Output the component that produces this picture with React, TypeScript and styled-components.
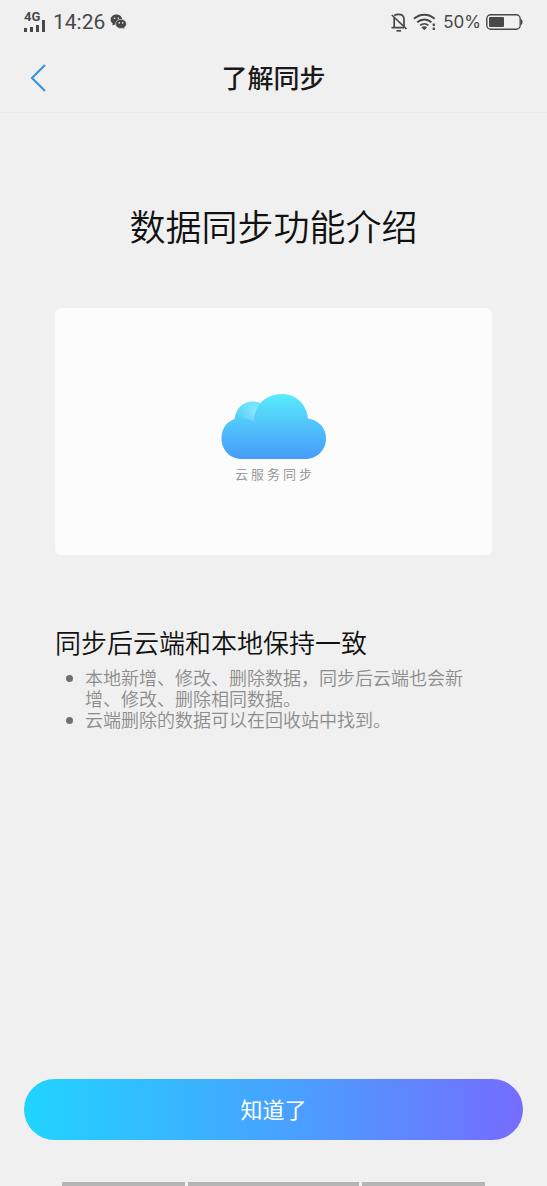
import React from "react";
import styled, { createGlobalStyle } from "styled-components";

const GlobalStyle = createGlobalStyle`
  * { box-sizing: border-box; }
  body {
    margin: 0;
    background: #f0f0f0;
    color: #111;
    font-family: Roboto, "Noto Sans CJK SC", sans-serif;
  }
`;

const Page = styled.div`
  min-height: 100vh;
  display: flex;
  flex-direction: column;
`;

const StatusBar = styled.div`
  display: flex;
  align-items: center;
  justify-content: space-between;
  height: 44px;
  padding: 0 24px;
  color: #484848;
`;

const StatusGroup = styled.div`
  display: flex;
  align-items: center;
  gap: 5px;
`;

const Signal = styled.div`
  display: flex;
  flex-direction: column;
  width: 24px;
  font-size: 13px;
  line-height: 10px;
  font-weight: 700;

  svg {
    margin-top: -3px;
  }
`;

const Clock = styled.span`
  font-size: 21px;
  line-height: 24px;
`;

const Percent = styled.span`
  font-family: Inter, sans-serif;
  font-size: 17px;
  line-height: 24px;
`;

const Header = styled.header`
  display: grid;
  grid-template-columns: 52px 1fr 52px;
  align-items: center;
  height: 69px;
  padding: 0 12px;
  border-bottom: 1px solid #e9e9e9;
`;

const BackButton = styled.button`
  display: flex;
  align-items: center;
  justify-content: center;
  height: 52px;
  padding: 0;
  border: 0;
  background: none;
  color: #3b94e0;
`;

const HeaderTitle = styled.h1`
  margin: 0;
  padding-top: 2px;
  text-align: center;
  font-size: 26px;
  line-height: 40px;
  font-weight: 500;
  color: #1a1a1a;
`;

const Main = styled.main`
  flex: 1;
  padding: 88px 55px 40px;
`;

const Title = styled.h2`
  margin: 0;
  text-align: center;
  font-size: 36px;
  line-height: 56px;
  font-weight: 350;
`;

const Card = styled.figure`
  display: flex;
  flex-direction: column;
  align-items: center;
  margin: 51px 0 0;
  padding: 85px 0 69px;
  border-radius: 6px;
  background: #fcfcfc;
`;

const Caption = styled.figcaption`
  margin-top: 5px;
  font-size: 13px;
  line-height: 22px;
  letter-spacing: 3px;
  padding-left: 3px;
  font-weight: 350;
  color: #909090;
`;

const SectionTitle = styled.h3`
  margin: 69px 0 0;
  font-size: 26px;
  line-height: 40px;
  font-weight: 350;
`;

const List = styled.ul`
  margin: 4px 0 0;
  padding: 0 18px 0 30px;
  list-style: none;
  font-size: 18px;
  line-height: 21px;
  font-weight: 350;
  color: #8c8c8c;
`;

const Item = styled.li`
  position: relative;

  &::before {
    content: "";
    position: absolute;
    left: -19px;
    top: 7px;
    width: 7px;
    height: 7px;
    border-radius: 50%;
    background: #707070;
  }
`;

const Footer = styled.footer`
  padding: 0 24px;
`;

const Confirm = styled.button`
  display: block;
  width: 100%;
  height: 61px;
  padding: 2px 0 0;
  border: 0;
  border-radius: 31px;
  background: linear-gradient(90deg, #20d4ff 0%, #46a4ff 50%, #766cff 100%);
  color: #fff;
  font-family: inherit;
  font-size: 22px;
  line-height: 32px;
`;

const GestureBar = styled.div`
  display: grid;
  grid-template-columns: 123fr 171fr 123fr;
  gap: 3px;
  margin: 42px 38px 0;

  span {
    height: 4px;
    background: #b5b5b5;
  }
`;

const SignalBars = () => (
  <svg width="22" height="13" viewBox="0 0 22 13" fill="currentColor" aria-hidden="true">
    <rect x="0" y="9" width="3" height="4" />
    <rect x="6" y="8" width="3" height="5" />
    <rect x="12" y="6" width="3" height="7" />
    <rect x="18" y="1" width="3" height="12" />
  </svg>
);

const WechatIcon = () => (
  <svg width="17" height="16" viewBox="0 0 17 16" aria-hidden="true">
    <path
      d="M6.4 .5C3.200 .5 .6 2.700.6 5.500c0 1.600.8 3 2.200 3.900L2.300 11.500l2.300-1.100c.6.200 1.200.300 1.900.300C9.700 10.700 12.200 8.300 12.200 5.500S9.700 .5 6.400 .5z"
      fill="#484848"
    />
    <path
      d="M11 5.300c-3.100 0-5.400 2-5.400 4.600s2.300 4.600 5.400 4.600c.6 0 1.200-.1 1.800-.3l1.900 1-.4-1.800c1.300-.8 2.100-2.100 2.100-3.500 0-2.600-2.300-4.600-5.400-4.600z"
      fill="#484848"
      stroke="#f0f0f0"
      strokeWidth="0.6"
    />
    <g fill="#f0f0f0">
      <circle cx="4.500" cy="4.200" r=".8" />
      <circle cx="8.300" cy="4.200" r=".8" />
      <circle cx="9.300" cy="8.900" r=".8" />
      <circle cx="12.700" cy="8.900" r=".8" />
    </g>
  </svg>
);

const MutedBell = () => (
  <svg
    width="17"
    height="19"
    viewBox="0 0 17 19"
    fill="none"
    stroke="currentColor"
    strokeWidth="1.700"
    aria-hidden="true"
  >
    <path d="M3.200 4.500v10M.5 14.600h12.500M3.200 2.400C4.600 1.600 6 1.300 7.600 1.300c3.400 0 5.400 2 5.400 5v7" />
    <path d="M.8 2 15.500 16" />
    <path d="M5.500 17.800h4.500" />
  </svg>
);

const WifiIcon = () => (
  <svg
    width="25"
    height="18"
    viewBox="0 0 25 18"
    fill="none"
    stroke="currentColor"
    strokeWidth="1.900"
    aria-hidden="true"
  >
    <path d="M1 5.800C6.800.4 15.800.4 21.600 5.800" />
    <path d="M4.200 9.200c4-3.700 10.200-3.700 14.200 0" />
    <path d="M7.200 12.400c2.400-2.100 5.800-2.100 8.200 0" />
    <path d="M8.400 14.200c1.700-1.400 4.100-1.400 5.800 0L11.300 17.200z" fill="currentColor" stroke="none" />
    <path d="M20.800 10.500v2.600M20.800 14.400V17" strokeWidth="2.200" />
  </svg>
);

const BatteryIcon = () => (
  <svg width="37" height="16" viewBox="0 0 37 16" aria-hidden="true">
    <rect x=".8" y=".8" width="33.400" height="14.400" rx="4" fill="none" stroke="currentColor" strokeWidth="1.400" />
    <rect x="3" y="3" width="15" height="10" rx="1" fill="currentColor" />
    <path d="M35 5c2 .6 2 5.400 0 6z" fill="currentColor" />
  </svg>
);

const CloudIcon = () => (
  <svg width="106" height="66" viewBox="0 0 106 66" role="img" aria-label="云服务">
    <defs>
      <linearGradient id="cloud" gradientUnits="userSpaceOnUse" x1="0" y1="0" x2="0" y2="66">
        <stop offset="0" stopColor="#59eefb" />
        <stop offset=".5" stopColor="#50c2fb" />
        <stop offset="1" stopColor="#469bfa" />
      </linearGradient>
      <radialGradient id="glow" gradientUnits="userSpaceOnUse" cx="34" cy="19" r="18">
        <stop offset="0" stopColor="#fff" stopOpacity=".34" />
        <stop offset="1" stopColor="#fff" stopOpacity="0" />
      </radialGradient>
    </defs>
    <path
      d="M21 66C9 66 .5 57 .5 45.500.5 35 6 28.500 13.500 26 15 15.500 22 8.500 32 8.500c3 0 5 .5 7.500 1.500C44.500 4.500 52 1 60.500 1 75 1 85.500 11 87 25.600 97.500 27 105 35 105 45.500 105 57 96 66 84.500 66z"
      fill="url(#cloud)"
    />
    <path
      d="M13.500 26C15 15.500 22 8.500 32 8.500c3 0 5 .5 7.500 1.500C36 14.500 33.300 20 33 28.500 27 25.500 20 24.500 13.500 26z"
      fill="url(#glow)"
    />
  </svg>
);

export default function App() {
  return (
    <Page lang="zh-CN">
      <GlobalStyle />
      <StatusBar>
        <StatusGroup>
          <Signal>
            4G
            <SignalBars />
          </Signal>
          <Clock>14:26</Clock>
          <WechatIcon />
        </StatusGroup>
        <StatusGroup>
          <MutedBell />
          <WifiIcon />
          <Percent>50%</Percent>
          <BatteryIcon />
        </StatusGroup>
      </StatusBar>
      <Header>
        <BackButton type="button" aria-label="返回">
          <svg width="18" height="28" viewBox="0 0 18 28" fill="none" stroke="currentColor" strokeWidth="2.200">
            <path d="M16 1 3 14 16 27" />
          </svg>
        </BackButton>
        <HeaderTitle>了解同步</HeaderTitle>
      </Header>
      <Main>
        <Title>数据同步功能介绍</Title>
        <Card>
          <CloudIcon />
          <Caption>云服务同步</Caption>
        </Card>
        <SectionTitle>同步后云端和本地保持一致</SectionTitle>
        <List>
          <Item>本地新增、修改、删除数据，同步后云端也会新增、修改、删除相同数据。</Item>
          <Item>云端删除的数据可以在回收站中找到。</Item>
        </List>
      </Main>
      <Footer>
        <Confirm type="button">知道了</Confirm>
        <GestureBar aria-hidden="true">
          <span />
          <span />
          <span />
        </GestureBar>
      </Footer>
    </Page>
  );
}
